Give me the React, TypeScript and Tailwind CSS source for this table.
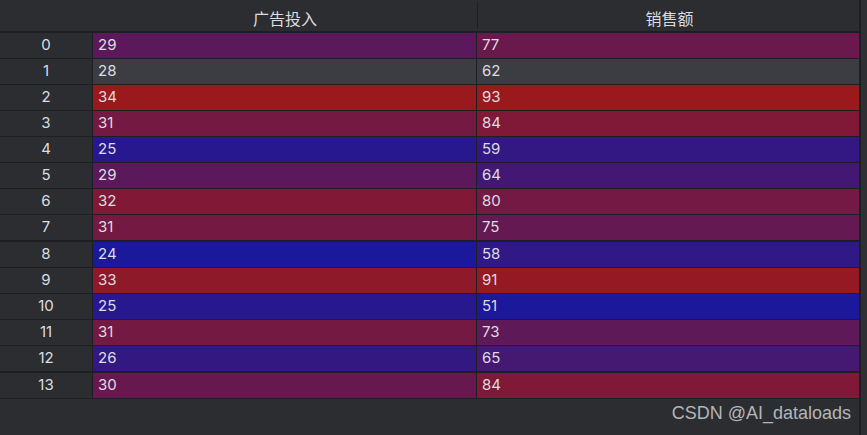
const rows: [number, number][] = [
  [29, 77],
  [28, 62],
  [34, 93],
  [31, 84],
  [25, 59],
  [29, 64],
  [32, 80],
  [31, 75],
  [24, 58],
  [33, 91],
  [25, 51],
  [31, 73],
  [26, 65],
  [30, 84],
];

// blue -> red, like a coolwarm style gradient
const cellColor = (v: number, min: number, max: number) => {
  const t = (v - min) / (max - min);
  const r = Math.round(27 + t * (154 - 27));
  const g = Math.round(24 + t * (25 - 24));
  const b = Math.round(156 + t * (28 - 156));
  return `rgb(${r}, ${g}, ${b})`;
};

const App = () => {
  return (
    <div
      className="w-[867px] h-[435px] bg-[#2b2d30] flex text-[#dcdde0] overflow-hidden"
      style={{ fontFamily: "Inter, 'Noto Sans CJK SC', sans-serif" }}
    >
      <div className="w-[859px] flex flex-col">
        <div className="flex h-[32px] border-b border-[#1e1f22] text-[16px]">
          <div className="w-[93px]" />
          <div className="w-[384px] flex items-center justify-center pt-[6px]">广告投入</div>
          <div className="w-px my-[2px] bg-[#1e1f22]" />
          <div className="flex-1 flex items-center justify-center pt-[6px] pl-[2px]">销售额</div>
        </div>
        {rows.map(([a, b], i) => {
          const thick = i === 8 || i === 13;
          const gray = i === 1;
          return (
            <div
              key={i}
              className={`flex h-[26px] text-[15px] border-[#1e1f22] ${thick ? "border-t-2 h-[27px]" : "border-t"} first:border-t-0 first:h-[25px]`}
            >
              <div className="w-[93px] border-r border-[#1e1f22] flex items-center justify-center">
                {i}
              </div>
              <div
                className="w-[384px] flex items-center pl-[5px] border-r border-[#1e1f22]"
                style={{ backgroundColor: gray ? "#3b3d42" : cellColor(a, 24, 34) }}
              >
                {a}
              </div>
              <div
                className="flex-1 flex items-center pl-[5px]"
                style={{ backgroundColor: gray ? "#3b3d42" : cellColor(b, 51, 93) }}
              >
                {b}
              </div>
            </div>
          );
        })}
        <div className="border-t border-[#1e1f22] flex-1 flex items-end justify-end pr-[8px] pb-[8px]">
          <span
            className="text-[18px] text-[#b4b5b8]"
            style={{ fontFamily: "'Liberation Sans', Arial, sans-serif" }}
          >
            CSDN @AI_dataloads
          </span>
        </div>
      </div>
      <div className="w-[2px] bg-[#1e1f22]" />
      <div className="flex-1 bg-[#2e3034]" />
    </div>
  );
};

export default App;
